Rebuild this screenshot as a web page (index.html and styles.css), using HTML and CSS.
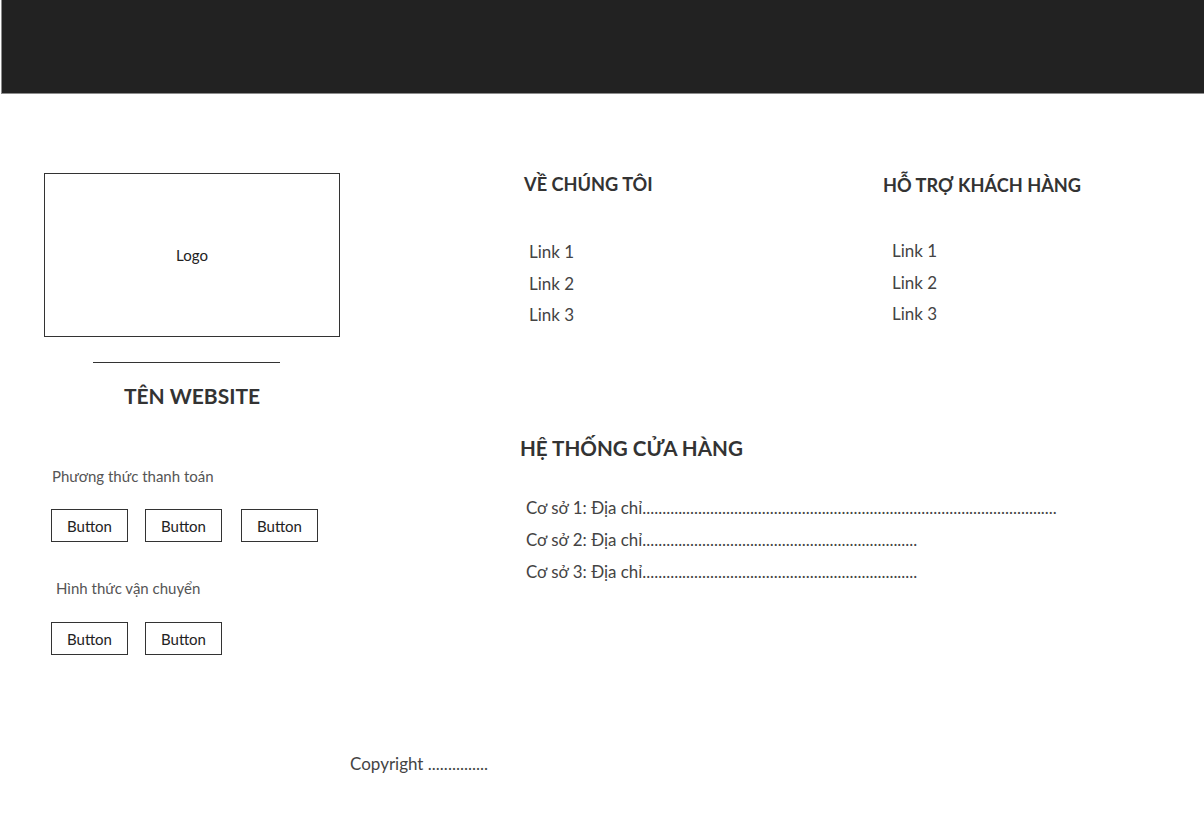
FILE: index.html
```html
<!DOCTYPE html>
<html lang="vi">
<head>
<meta charset="utf-8">
<title>Footer</title>
<link rel="stylesheet" href="styles.css">
</head>
<body>
<header class="topbar"></header>
<footer class="footer">
  <div class="content">
    <section class="brand">
      <div class="logo-box">Logo</div>
      <div class="divider"></div>
      <h2 class="site-name">TÊN WEBSITE</h2>
      <p class="label label-pay">Phương thức thanh toán</p>
      <div class="buttons buttons-pay">
        <button class="btn">Button</button>
        <button class="btn">Button</button>
        <button class="btn btn-wide-gap">Button</button>
      </div>
      <p class="label label-ship">Hình thức vận chuyển</p>
      <div class="buttons buttons-ship">
        <button class="btn">Button</button>
        <button class="btn">Button</button>
      </div>
    </section>
    <section class="info">
      <div class="link-cols">
        <div class="col col-about">
          <h3 class="col-title">VỀ CHÚNG TÔI</h3>
          <ul class="links">
            <li>Link 1</li>
            <li>Link 2</li>
            <li>Link 3</li>
          </ul>
        </div>
        <div class="col col-support">
          <h3 class="col-title">HỖ TRỢ KHÁCH HÀNG</h3>
          <ul class="links">
            <li>Link 1</li>
            <li>Link 2</li>
            <li>Link 3</li>
          </ul>
        </div>
      </div>
      <h3 class="stores-title">HỆ THỐNG CỬA HÀNG</h3>
      <ul class="stores">
        <li>Cơ sở 1: Địa chỉ........................................................................................................</li>
        <li>Cơ sở 2: Địa chỉ.....................................................................</li>
        <li>Cơ sở 3: Địa chỉ.....................................................................</li>
      </ul>
    </section>
  </div>
  <p class="copyright">Copyright ...............</p>
</footer>
</body>
</html>
```
FILE: styles.css
```css
html, body {
  margin: 0;
  padding: 0;
}
body {
  width: 1204px;
  height: 817px;
  overflow: hidden;
  background: #ffffff;
  font-family: Lato, "Noto Sans", "Liberation Sans", sans-serif;
  color: #444;
}
.topbar {
  height: 93px;
  margin-left: 1px;
  background: #222222;
  border-left: 1px solid #8c8c8c;
  border-bottom: 1px solid #8c8c8c;
}
.content {
  display: flex;
  padding: 79px 0 0 44px;
}
.brand {
  width: 296px;
  flex: none;
  display: flex;
  flex-direction: column;
}
.logo-box {
  height: 162px;
  border: 1.5px solid #333;
  display: flex;
  align-items: center;
  justify-content: center;
  font-size: 15px;
  color: #222;
}
.divider {
  width: 187px;
  border-top: 1.5px solid #333;
  margin: 25px 0 0 49px;
}
.site-name {
  margin: 21px 0 0 0;
  font-size: 21px;
  line-height: 24px;
  font-weight: 700;
  text-align: center;
  color: #333;
}
.label {
  margin: 0;
  font-size: 15px;
  line-height: 18px;
  color: #555;
}
.label-pay {
  margin: 59px 0 0 8px;
}
.label-ship {
  margin: 37px 0 0 12px;
}
.buttons {
  display: flex;
  gap: 17px;
  margin-left: 7px;
}
.buttons-pay {
  margin-top: 24px;
}
.buttons-ship {
  margin-top: 25px;
}
.btn {
  width: 77px;
  height: 33px;
  padding: 0;
  background: #fff;
  border: 1.5px solid #333;
  border-radius: 0;
  font-family: inherit;
  font-size: 15px;
  color: #222;
}
.btn-wide-gap {
  margin-left: 2px;
}
.info {
  margin-left: 180px;
  display: flex;
  flex-direction: column;
}
.link-cols {
  display: flex;
}
.col-about {
  width: 363px;
}
.col-title {
  margin: 0 0 0 4px;
  font-size: 18.2px;
  line-height: 22px;
  font-weight: 700;
  color: #333;
}
.col-support .col-title {
  margin-left: 0;
  margin-top: 1px;
}
.links {
  list-style: none;
  margin: 41px 0 0 9px;
  padding: 0;
  font-size: 17px;
  line-height: 31.5px;
  color: #444;
}
.col-support .links {
  margin-top: 39px;
}
.stores-title {
  margin: 104px 0 0 0;
  font-size: 20.6px;
  line-height: 26px;
  font-weight: 700;
  color: #333;
}
.stores {
  list-style: none;
  margin: 31px 0 0 6px;
  padding: 0;
  font-size: 16.9px;
  line-height: 32px;
  color: #444;
  white-space: nowrap;
}
.copyright {
  margin: 98px 0 0 350px;
  font-size: 17px;
  line-height: 22px;
  color: #444;
}
```
